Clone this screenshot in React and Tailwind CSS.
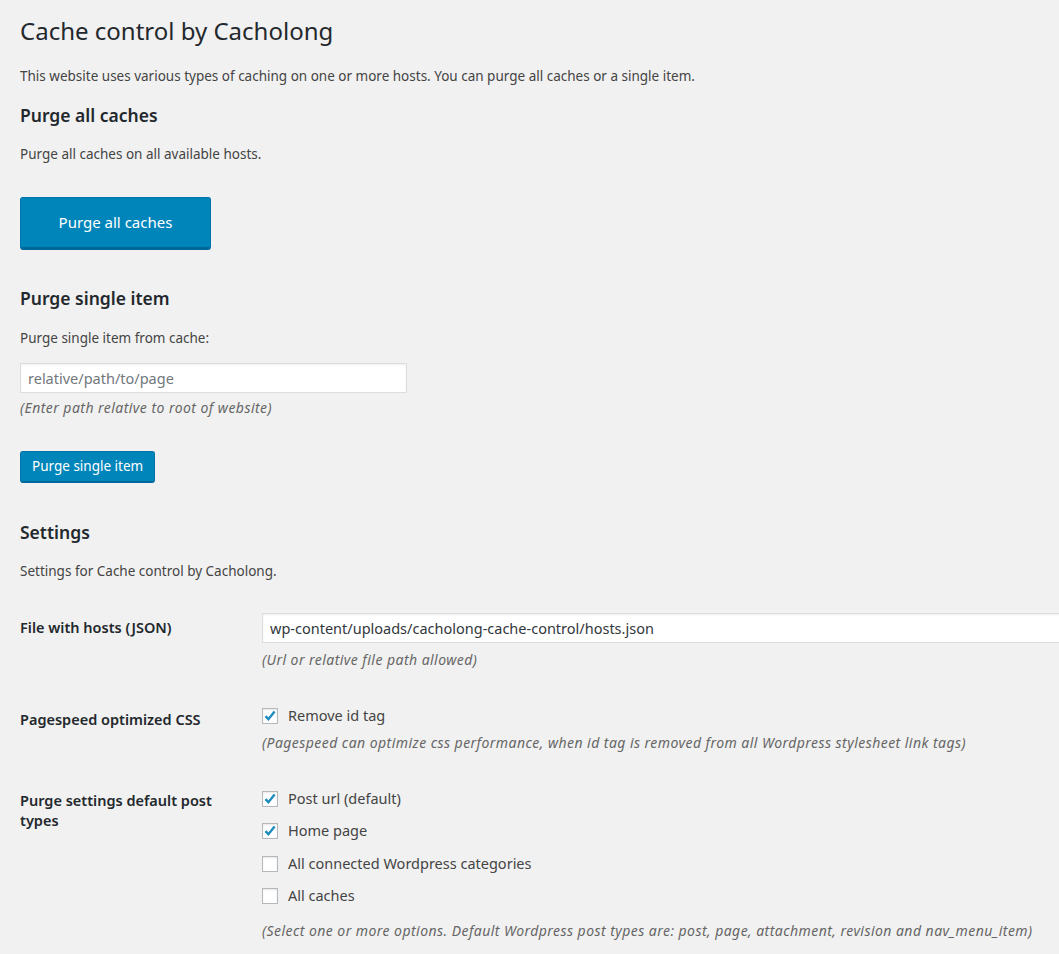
import { useState } from "react";

const font = { fontFamily: '"Noto Sans", "Open Sans", sans-serif' };

const Check = ({ checked, onChange, label }) => (
  <label className="flex items-center h-[32.5px] cursor-pointer">
    <span
      onClick={onChange}
      className="w-[16px] h-[16px] bg-white border border-[#b4b9be] shadow-[inset_0_1px_2px_rgba(0,0,0,0.1)] flex items-center justify-center mr-[10px] shrink-0"
    >
      {checked && (
        <svg width="14" height="14" viewBox="0 0 14 14">
          <path d="M2.5 7.2 L5.4 10.2 L11.6 2.6" fill="none" stroke="#1e8cbe" strokeWidth="2.4" />
        </svg>
      )}
    </span>
    <span className="text-[14.5px] text-[#444]">{label}</span>
  </label>
);

const App = () => {
  const [removeId, setRemoveId] = useState(true);
  const [postTypes, setPostTypes] = useState({
    post: true,
    home: true,
    cats: false,
    all: false,
  });
  const toggle = (k) => setPostTypes((p) => ({ ...p, [k]: !p[k] }));

  return (
    <div className="min-h-screen bg-[#f1f1f1] overflow-x-hidden text-[#444]" style={font}>
      <div className="pl-[20px] pt-[16px] pb-[40px]">
        <h1 className="text-[24px] leading-[30px] text-[#23282d] font-normal">
          Cache control by Cacholong
        </h1>
        <p className="text-[13.5px] leading-[20px] mt-[20px]">
          This website uses various types of caching on one or more hosts. You can purge all caches or a single item.
        </p>

        <h2 className="text-[17.5px] leading-[22px] font-semibold text-[#23282d] mt-[18px]">Purge all caches</h2>
        <p className="text-[13.5px] leading-[20px] mt-[18px]">Purge all caches on all available hosts.</p>
        <button className="mt-[33px] w-[191px] h-[53px] bg-[#0085ba] border border-[#0073aa] border-b-[3px] border-b-[#006799] rounded-[3px] text-white text-[15px]">
          Purge all caches
        </button>

        <h2 className="text-[17.5px] leading-[22px] font-semibold text-[#23282d] mt-[37px]">Purge single item</h2>
        <p className="text-[13.5px] leading-[20px] mt-[19px]">Purge single item from cache:</p>
        <input
          placeholder="relative/path/to/page"
          className="mt-[15px] block w-[387px] h-[30px] bg-white border border-[#ddd] shadow-[inset_0_1px_2px_rgba(0,0,0,0.07)] px-[7px] text-[14.5px] text-[#32373c] placeholder:text-[#72777c] outline-none"
        />
        <p className="text-[14px] leading-[20px] italic text-[#666] tracking-[0.45px] mt-[5px]">(Enter path relative to root of website)</p>
        <button className="mt-[33px] h-[32px] px-[11px] bg-[#0085ba] border border-[#0073aa] border-b-[2px] border-b-[#006799] rounded-[3px] text-white text-[13.5px]">
          Purge single item
        </button>

        <h2 className="text-[17.5px] leading-[22px] font-semibold text-[#23282d] mt-[38px]">Settings</h2>
        <p className="text-[13.5px] leading-[20px] mt-[18px]">Settings for Cache control by Cacholong.</p>

        <div className="grid grid-cols-[242px_1fr] mt-[32px]">
          <div className="text-[14.5px] leading-[20px] font-semibold text-[#23282d] pt-[4px]">File with hosts (JSON)</div>
          <div>
            <input
              defaultValue="wp-content/uploads/cacholong-cache-control/hosts.json"
              className="block w-[820px] h-[30px] bg-white border border-[#ddd] shadow-[inset_0_1px_2px_rgba(0,0,0,0.07)] px-[7px] text-[14.5px] text-[#32373c] outline-none"
            />
            <p className="text-[14px] leading-[20px] italic text-[#666] tracking-[0.45px] mt-[7px]">(Url or relative file path allowed)</p>
          </div>

          <div className="text-[14.5px] leading-[20px] font-semibold text-[#23282d] mt-[39px]">Pagespeed optimized CSS</div>
          <div className="mt-[30px]">
            <Check checked={removeId} onChange={() => setRemoveId(!removeId)} label="Remove id tag" />
            <p className="text-[14px] leading-[20px] italic text-[#666] tracking-[0.45px]">
              (Pagespeed can optimize css performance, when id tag is removed from all Wordpress stylesheet link tags)
            </p>
          </div>

          <div className="text-[14.5px] leading-[20px] font-semibold text-[#23282d] mt-[37px] pr-[30px]">
            Purge settings default post types
          </div>
          <div className="mt-[30px]">
            <Check checked={postTypes.post} onChange={() => toggle("post")} label="Post url (default)" />
            <Check checked={postTypes.home} onChange={() => toggle("home")} label="Home page" />
            <Check checked={postTypes.cats} onChange={() => toggle("cats")} label="All connected Wordpress categories" />
            <Check checked={postTypes.all} onChange={() => toggle("all")} label="All caches" />
            <p className="text-[14px] leading-[20px] italic text-[#666] tracking-[0.45px] mt-[8px]">
              (Select one or more options. Default Wordpress post types are: post, page, attachment, revision and nav_menu_item)
            </p>
          </div>
        </div>
      </div>
    </div>
  );
};

export default App;
